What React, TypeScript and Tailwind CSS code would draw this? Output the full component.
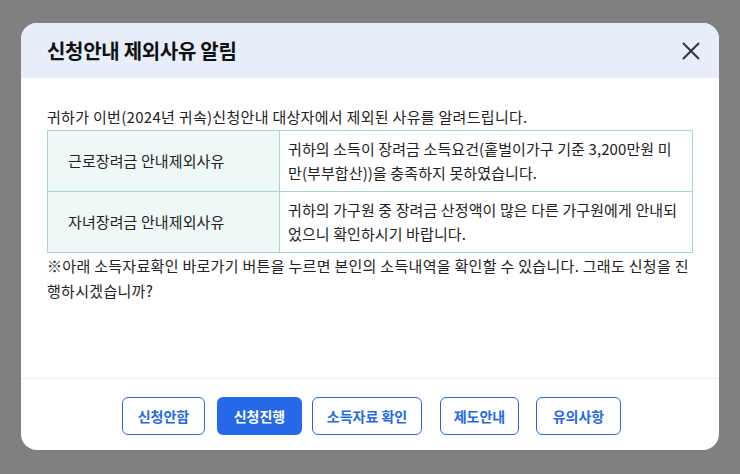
import React from "react";

const font = { fontFamily: '"Noto Sans CJK KR", "Noto Sans", sans-serif' };

export default function App() {
  const btn =
    "h-[38px] rounded-[6px] border border-[#2569e8] text-[14px] font-semibold text-[#2569e8] bg-white flex items-center justify-center";
  return (
    <div className="h-[474px] w-[740px] bg-[#808080] pt-[23px] pl-[21px]" style={font}>
      <div className="w-[698px] h-[427px] bg-white rounded-[16px] overflow-hidden flex flex-col">
        <div className="h-[55px] bg-[#e7eef9] flex items-center justify-between pl-[26px] pr-[18px]">
          <div className="text-[20px] font-bold text-[#111] tracking-[-0.3px]">신청안내 제외사유 알림</div>
          <svg width="20" height="20" viewBox="0 0 20 20" className="mt-[1px]">
            <path d="M2 2 L18 18 M18 2 L2 18" stroke="#333" strokeWidth="2" />
          </svg>
        </div>
        <div className="flex-1 px-[26px] pt-[26px] text-[15px] tracking-[0.1px] text-[#222]">
          <div className="leading-[26px] tracking-[0.3px]">귀하가 이번(2024년 귀속)신청안내 대상자에서 제외된 사유를 알려드립니다.</div>
          <div className="border border-[#a8d4d4]">
            <div className="flex border-b border-[#a8d4d4] h-[61px]">
              <div className="w-[232px] bg-[#eef8f7] border-r border-[#a8d4d4] flex items-center pl-[20px]">
                근로장려금 안내제외사유
              </div>
              <div className="flex-1 pl-[8px] pr-[8px] leading-[24px] flex items-center">
                귀하의 소득이 장려금 소득요건(홑벌이가구 기준 3,200만원 미만(부부합산))을 충족하지 못하였습니다.
              </div>
            </div>
            <div className="flex h-[60px]">
              <div className="w-[232px] bg-[#eef8f7] border-r border-[#a8d4d4] flex items-center pl-[20px]">
                자녀장려금 안내제외사유
              </div>
              <div className="flex-1 pl-[8px] pr-[8px] leading-[24px] flex items-center">
                귀하의 가구원 중 장려금 산정액이 많은 다른 가구원에게 안내되었으니 확인하시기 바랍니다.
              </div>
            </div>
          </div>
          <div className="leading-[25px] tracking-[0.3px]">
            ※아래 소득자료확인 바로가기 버튼을 누르면 본인의 소득내역을 확인할 수 있습니다. 그래도 신청을 진행하시겠습니까?
          </div>
        </div>
        <div className="border-t border-[#e6eef9] h-[72px] flex items-start justify-center pt-[18px]">
          <button className={`${btn} w-[83px] ml-[3px]`}>신청안함</button>
          <button className={`h-[38px] rounded-[6px] bg-[#2569e8] text-white text-[14px] font-semibold w-[85px] ml-[12px]`}>신청진행</button>
          <button className={`${btn} w-[110px] ml-[10px]`}>소득자료 확인</button>
          <button className={`${btn} w-[79px] ml-[18px]`}>제도안내</button>
          <button className={`${btn} w-[85px] ml-[17px]`}>유의사항</button>
        </div>
      </div>
    </div>
  );
}
